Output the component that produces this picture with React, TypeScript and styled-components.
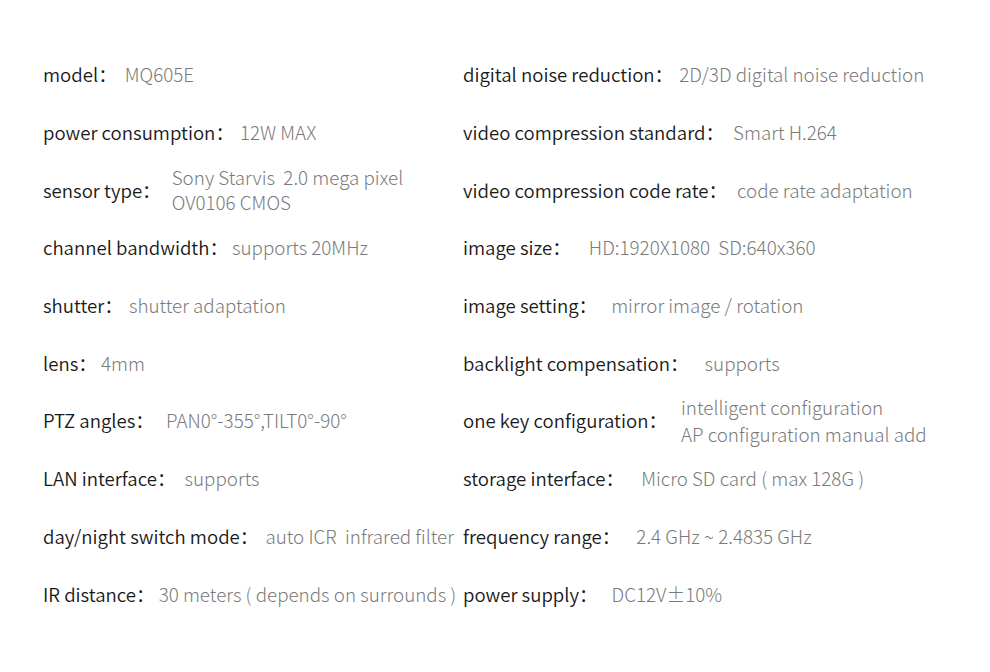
import styled, { createGlobalStyle } from "styled-components";

const GlobalStyle = createGlobalStyle`
    html, body {
        margin: 0;
        padding: 0;
        background: #ffffff;
    }
    body {
        font-family: "Noto Sans CJK SC", "Noto Sans", sans-serif;
    }
`;

const Page = styled.div`
    width: 990px;
    height: 672px;
    box-sizing: border-box;
    padding: 45px 0 0 43px;
    display: grid;
    grid-template-columns: 420px 1fr;
    background: #ffffff;
`;

const Column = styled.div`
    display: flex;
    flex-direction: column;
`;

const Row = styled.div`
    height: 57.7px;
    display: flex;
    align-items: center;
    white-space: pre;
`;

const Label = styled.span`
    font-size: 18.6px;
    font-weight: 350;
    color: #1a1a1a;
`;

const Value = styled.div<{ $gap: number; $lineHeight?: number }>`
    margin-left: ${(p) => p.$gap}px;
    font-size: 18.8px;
    font-weight: 300;
    color: #7a7a7a;
    line-height: ${(p) => p.$lineHeight ?? 25}px;
`;

type Spec = { label: string; value: string[]; gap: number; lh?: number };

const left: Spec[] = [
    { label: "model", value: ["MQ605E"], gap: 8 },
    { label: "power consumption", value: ["12W MAX"], gap: 6 },
    { label: "sensor type", value: ["Sony Starvis  2.0 mega pixel", "OV0106 CMOS"], gap: 11 },
    { label: "channel bandwidth", value: ["supports 20MHz"], gap: 4 },
    { label: "shutter", value: ["shutter adaptation"], gap: 6 },
    { label: "lens", value: ["4mm"], gap: 4 },
    { label: "PTZ angles", value: ["PAN0°-355°,TILT0°-90°"], gap: 12 },
    { label: "LAN interface", value: ["supports"], gap: 9 },
    { label: "day/night switch mode", value: ["auto ICR  infrared filter"], gap: 7 },
    { label: "IR distance", value: ["30 meters ( depends on surrounds )"], gap: 4 },
];

const right: Spec[] = [
    { label: "digital noise reduction", value: ["2D/3D digital noise reduction"], gap: 6 },
    { label: "video compression standard", value: ["Smart H.264"], gap: 9 },
    { label: "video compression code rate", value: ["code rate adaptation"], gap: 10 },
    { label: "image size", value: ["HD:1920X1080  SD:640x360"], gap: 18 },
    { label: "image setting", value: ["mirror image / rotation"], gap: 14 },
    { label: "backlight compensation", value: ["supports"], gap: 16 },
    { label: "one key configuration", value: ["intelligent configuration", "AP configuration manual add"], gap: 14, lh: 27 },
    { label: "storage interface", value: ["Micro SD card ( max 128G )"], gap: 17 },
    { label: "frequency range", value: ["2.4 GHz ~ 2.4835 GHz"], gap: 16 },
    { label: "power supply", value: ["DC12V±10%"], gap: 14 },
];

const SpecColumn = ({ items }: { items: Spec[] }) => (
    <Column>
        {items.map((s) => (
            <Row key={s.label}>
                <Label>{s.label}：</Label>
                <Value $gap={s.gap} $lineHeight={s.lh}>
                    {s.value.map((line) => (
                        <div key={line}>{line}</div>
                    ))}
                </Value>
            </Row>
        ))}
    </Column>
);

const App = () => {
    return (
        <>
            <GlobalStyle />
            <Page>
                <SpecColumn items={left} />
                <SpecColumn items={right} />
            </Page>
        </>
    );
};

export default App;
